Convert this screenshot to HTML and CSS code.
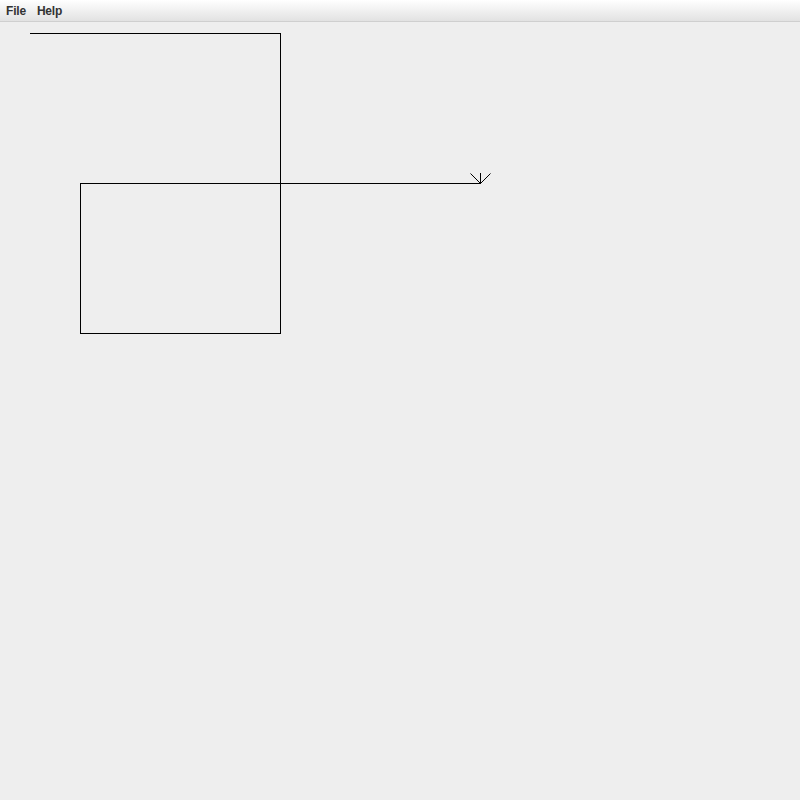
FILE: index.html
```html
<!DOCTYPE html>
<html>
<head>
<meta charset="utf-8">
<link rel="stylesheet" href="styles.css">
</head>
<body>
<div class="menubar">
  <span class="menu">File</span>
  <span class="menu">Help</span>
</div>
<div class="canvas">
  <svg class="drawing" width="800" height="778" viewBox="0 22 800 778" shape-rendering="crispEdges">
    <g stroke="#000" stroke-width="1" fill="none">
      <line x1="30" y1="33.5" x2="281" y2="33.5"/>
      <line x1="280.5" y1="33" x2="280.5" y2="334"/>
      <rect x="80.5" y="183.5" width="200" height="150"/>
      <line x1="280" y1="183.5" x2="481" y2="183.5"/>
      <line x1="480.5" y1="173" x2="480.5" y2="184"/>
    </g>
    <g stroke="#000" stroke-width="1" fill="none" shape-rendering="auto">
      <line x1="470.5" y1="173.5" x2="480.5" y2="183.5"/>
      <line x1="490.5" y1="173.5" x2="480.5" y2="183.5"/>
    </g>
  </svg>
</div>
</body>
</html>
```

FILE: styles.css
```css
html, body {
  margin: 0;
  padding: 0;
  width: 800px;
  height: 800px;
  overflow: hidden;
  background: #eeeeee;
}
.menubar {
  display: flex;
  align-items: center;
  gap: 11px;
  padding: 1px 6px 0;
  box-sizing: border-box;
  height: 22px;
  background: linear-gradient(#ffffff, #e2e2e2);
  border-bottom: 1px solid #cfcfcf;
  font-family: "Liberation Sans", Arial, sans-serif;
  font-weight: bold;
  font-size: 12px;
  letter-spacing: -0.2px;
  color: #333333;
}
.menu {
  line-height: 20px;
}
.canvas {
  position: relative;
  height: 778px;
  background: #eeeeee;
}
.drawing {
  display: block;
}
```
